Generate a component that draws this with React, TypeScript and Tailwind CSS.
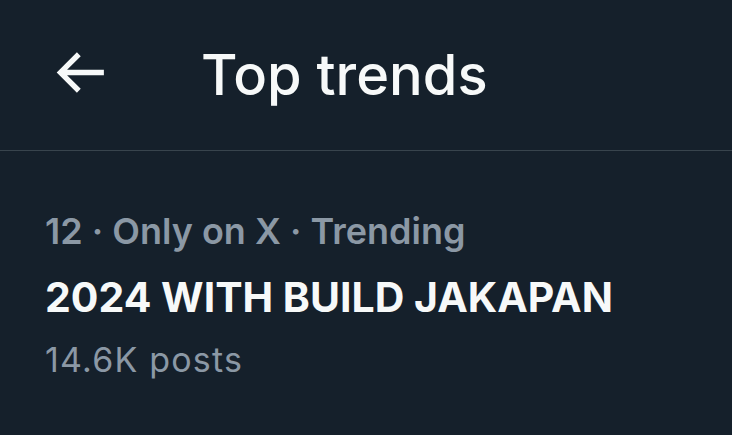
import React from "react";

function BackArrow() {
  return (
    <svg viewBox="0 0 24 24" className="h-[65px] w-[65px] fill-[#f7f9f9]">
      <path d="M7.414 13l5.043 5.04-1.414 1.42L3.586 12l7.457-7.46 1.414 1.42L7.414 11H21v2H7.414z" />
    </svg>
  );
}

export default function App() {
  return (
    <div className="h-[435px] w-[732px] overflow-hidden bg-[#15202b] font-['Inter',sans-serif]">
      <header className="flex h-[151px] items-center border-b border-[#38444d] pl-[47px]">
        <div className="-mt-[5px]">
          <BackArrow />
        </div>
        <h1 className="ml-[89px] text-[56px] leading-[64px] font-medium text-[#f7f9f9]">
          Top trends
        </h1>
      </header>
      <section className="flex flex-col pt-[56px] pl-[45px]">
        <p className="text-[36px] leading-[48px] font-semibold text-[#8b98a5]">
          12 · Only on X · Trending
        </p>
        <p className="mt-[14px] text-[41px] leading-[56px] font-bold text-[#f7f9f9]">
          2024 WITH BUILD JAKAPAN
        </p>
        <p className="mt-[11px] text-[34px] leading-[48px] tracking-[1.2px] text-[#8b98a5]">
          14.6K posts
        </p>
      </section>
    </div>
  );
}
